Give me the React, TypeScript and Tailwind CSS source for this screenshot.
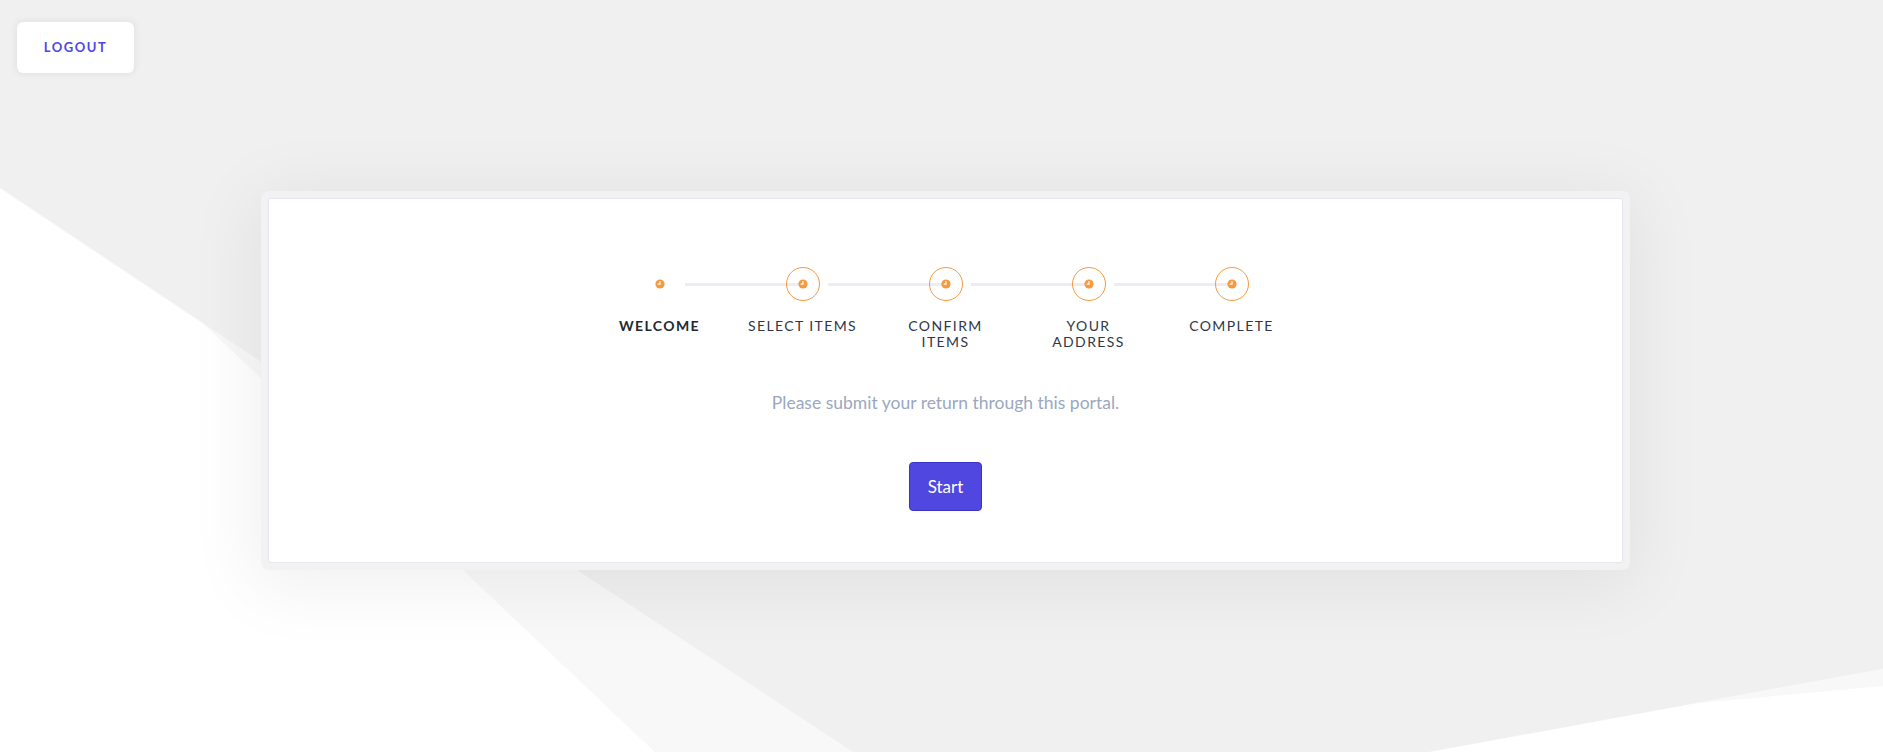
import React from "react";

const steps = [
  { label: ["WELCOME"], active: true },
  { label: ["SELECT ITEMS"], active: false },
  { label: ["CONFIRM", "ITEMS"], active: false },
  { label: ["YOUR", "ADDRESS"], active: false },
  { label: ["COMPLETE"], active: false },
];

const ClockDot = () => (
  <svg width="10" height="10" viewBox="0 0 10 10">
    <circle cx="5" cy="5" r="4.6" fill="#f6993f" />
    <path d="M5 2.6V5.2H3.2" fill="none" stroke="#fff" strokeWidth="1.2" strokeLinecap="round" />
  </svg>
);

function StepIcon({ ring }: { ring: boolean }) {
  return (
    <div
      className={
        "relative z-10 w-[34px] h-[34px] shrink-0 rounded-full flex items-center justify-center " +
        (ring ? "border-[1.5px] border-[#f6993f]" : "border-[1.5px] border-transparent")
      }
    >
      <ClockDot />
    </div>
  );
}

function Stepper() {
  return (
    <div className="flex flex-col items-center">
      {/* icons + connectors */}
      <div className="flex items-center">
        {steps.map((s, i) => (
          <React.Fragment key={i}>
            <StepIcon ring={!s.active} />
            {i < steps.length - 1 && (
              <div className="ml-[8px] mr-[-17px] w-[118px] h-[3px] bg-[#ececf2]" />
            )}
          </React.Fragment>
        ))}
      </div>
      {/* labels */}
      <div className="flex mt-[17px]">
        {steps.map((s, i) => (
          <div
            key={i}
            className={
              "w-[143px] text-center text-[14px] leading-[16px] tracking-[0.1em] whitespace-nowrap " +
              (s.active ? "font-bold text-[#22292f]" : "text-[#2f3747]")
            }
          >
            {s.label.map((l, j) => (
              <div key={j}>{l}</div>
            ))}
          </div>
        ))}
      </div>
    </div>
  );
}

export default function App() {
  return (
    <div className="relative w-full h-[752px] overflow-hidden bg-[#f0f0f0] font-['Lato','Noto_Sans',sans-serif]">
      {/* background shapes */}
      <svg className="absolute inset-0 w-full h-full" viewBox="0 0 1883 752" preserveAspectRatio="none">
        <polygon points="0,188 204,324 655,752 0,752" fill="#ffffff" />
        <polygon points="204,324 853,752 655,752" fill="#f8f8f8" />
        <polygon points="1429,752 1883,669 1883,752" fill="#ffffff" />
        <polygon points="1690,704 1883,669 1883,686" fill="#f8f8f8" />
      </svg>

      <div className="relative flex flex-col">
        {/* top bar */}
        <div className="pt-[22px] pl-[17px]">
          <button className="w-[117px] h-[51px] bg-white rounded-md shadow-[0_0_6px_2px_rgba(0,0,0,0.05)] text-[#4f46e5] text-[13px] font-bold tracking-[0.12em]">
            LOGOUT
          </button>
        </div>

        {/* card */}
        <div className="ml-[261px] mt-[118px] w-[1369px] p-[7px] bg-[#f2f2f3] rounded-lg shadow-[0_10px_70px_10px_rgba(0,0,0,0.06)]">
          <div className="h-[365px] bg-white border border-[#e7e5f0] rounded-[3px] flex flex-col items-center pt-[68px]">
            <Stepper />
            <p className="mt-[40px] text-[17.5px] text-[#9aa7c0]">
              Please submit your return through this portal.
            </p>
            <button className="mt-[46px] w-[73px] h-[49px] rounded-[4px] bg-[#4f47e0] border border-[#3b33c4] text-white text-[17px]">
              Start
            </button>
          </div>
        </div>
      </div>
    </div>
  );
}
